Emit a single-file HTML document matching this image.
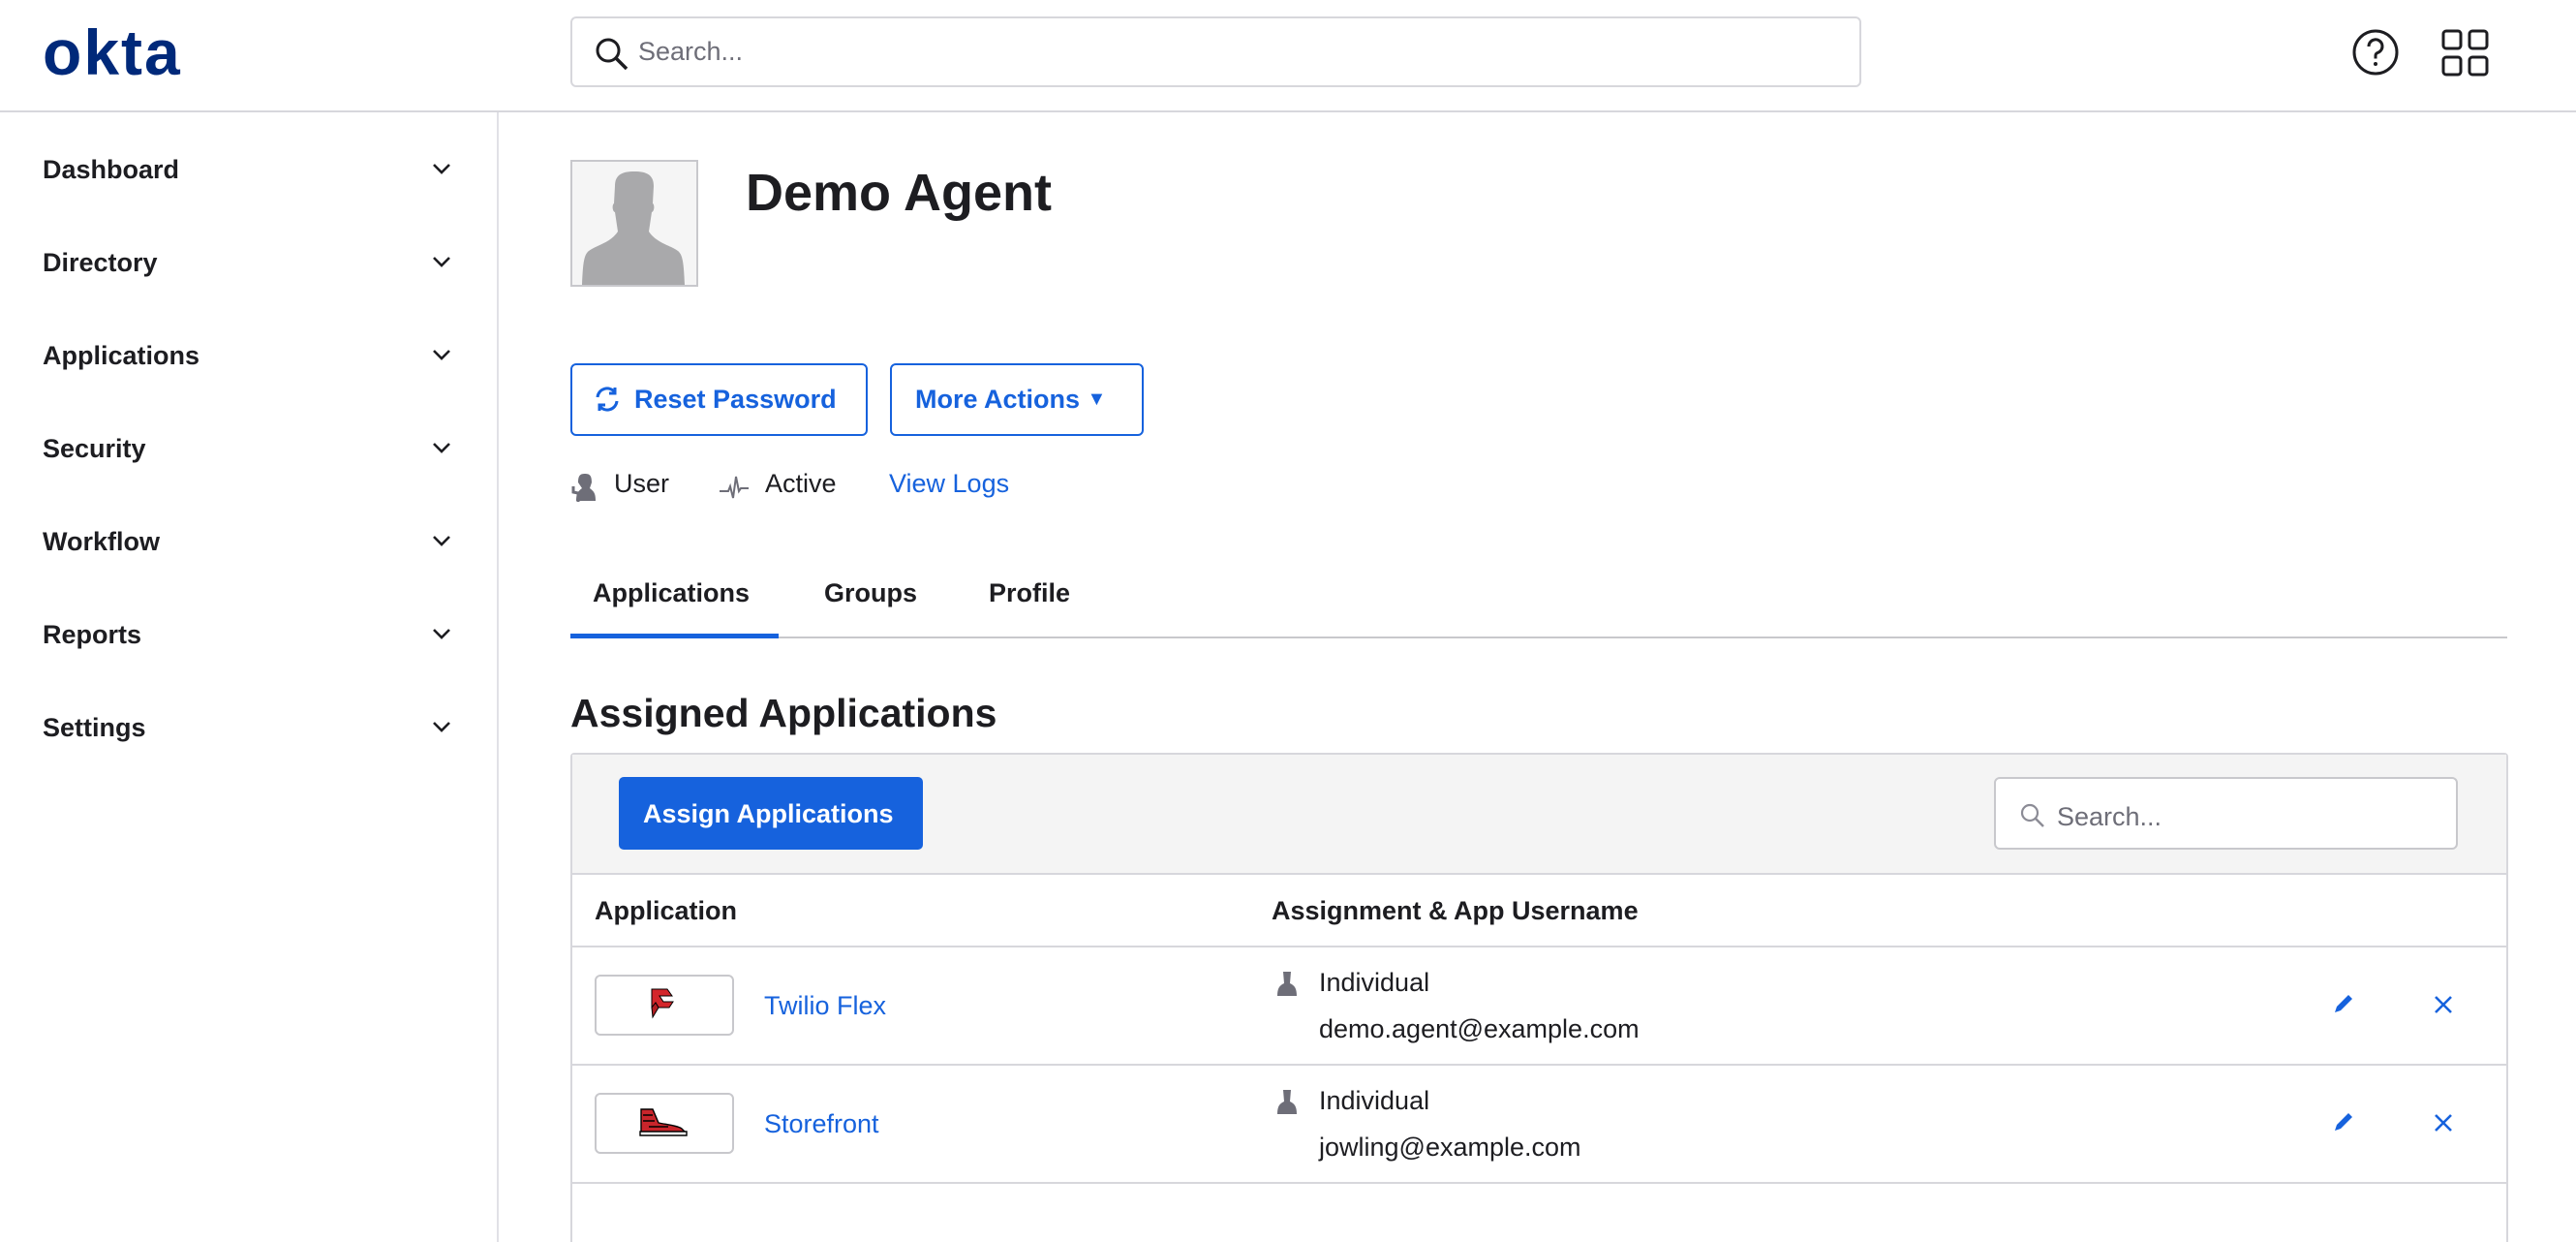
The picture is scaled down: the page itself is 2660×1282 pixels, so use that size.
<!DOCTYPE html>
<html><head><meta charset="utf-8"><style>
*{box-sizing:border-box;margin:0;padding:0}
html,body{width:2660px;height:1282px;overflow:hidden}
body{background:#fff;font-family:"Liberation Sans",sans-serif;color:#1d1d21;position:relative}
.a{position:absolute}
.blue{color:#1662dd}
.nav{position:absolute;left:44px;font-size:27px;font-weight:bold;line-height:1}
.chev{position:absolute;left:446px;width:20px;height:20px}
.t27{font-size:27px;line-height:1}
</style></head><body>
<!-- header -->
<div class="a" style="left:44px;top:21px;font-size:66px;font-weight:bold;color:#00297a;letter-spacing:2px;line-height:1">okta</div>
<div class="a" style="left:589px;top:17px;width:1333px;height:73px;border:2px solid #d7d7dc;border-radius:6px"></div>
<svg class="a" style="left:614px;top:38px" width="36" height="36" viewBox="0 0 36 36"><circle cx="14" cy="14" r="11" fill="none" stroke="#1d1d21" stroke-width="3"/><line x1="22" y1="22" x2="33" y2="33" stroke="#1d1d21" stroke-width="3.5"/></svg>
<div class="a t27" style="left:659px;top:40px;color:#6e6e78">Search...</div>
<svg class="a" style="left:2428px;top:29px" width="50" height="50" viewBox="0 0 50 50"><circle cx="25" cy="25" r="22" fill="none" stroke="#1d1d21" stroke-width="3"/><path d="M18 19a7 7 0 1 1 9 6.5c-1.5.6-2 1.5-2 3v3" fill="none" stroke="#1d1d21" stroke-width="3"/><circle cx="25" cy="37" r="2" fill="#1d1d21"/></svg>
<svg class="a" style="left:2521px;top:30px" width="50" height="50" viewBox="0 0 50 50" fill="none" stroke="#1d1d21" stroke-width="3"><rect x="2" y="2" width="18" height="18" rx="3"/><rect x="29" y="2" width="18" height="18" rx="3"/><rect x="2" y="29" width="18" height="18" rx="3"/><rect x="29" y="29" width="18" height="18" rx="3"/></svg>
<div class="a" style="left:0;top:114px;width:2660px;height:2px;background:#d7d7dc"></div>
<div class="a" style="left:513px;top:116px;width:2px;height:1166px;background:#e1e1e6"></div>
<!-- nav -->
<div class="nav" style="top:162px">Dashboard</div>
<div class="nav" style="top:258px">Directory</div>
<div class="nav" style="top:354px">Applications</div>
<div class="nav" style="top:450px">Security</div>
<div class="nav" style="top:546px">Workflow</div>
<div class="nav" style="top:642px">Reports</div>
<div class="nav" style="top:738px">Settings</div>
<svg width="0" height="0" style="position:absolute"><defs><path id="cv" d="M2 6l8 8 8-8" fill="none" stroke="#1d1d21" stroke-width="2.6"/></defs></svg>
<svg class="chev" style="top:164px"><use href="#cv"/></svg>
<svg class="chev" style="top:260px"><use href="#cv"/></svg>
<svg class="chev" style="top:356px"><use href="#cv"/></svg>
<svg class="chev" style="top:452px"><use href="#cv"/></svg>
<svg class="chev" style="top:548px"><use href="#cv"/></svg>
<svg class="chev" style="top:644px"><use href="#cv"/></svg>
<svg class="chev" style="top:740px"><use href="#cv"/></svg>
<!-- profile -->
<div class="a" style="left:589px;top:165px;width:132px;height:131px;border:2px solid #c8c8cc;background:#f5f5f5;overflow:hidden">
<svg width="128" height="127" viewBox="0 0 128 127"><path d="M44 25c0-12 8-15 20-15s20 3 20 15l-1 18c2 1 2 8-1 9l-3 20c8 12 22 14 30 20 5 4 6 12 7 35H10c1-23 2-31 7-35 8-6 22-8 30-20l-3-20c-3-1-3-8-1-9z" fill="#a9a9ab"/></svg></div>
<div class="a" style="left:770px;top:172px;font-size:54px;font-weight:bold;line-height:1">Demo Agent</div>
<div class="a" style="left:589px;top:375px;width:307px;height:75px;border:2px solid #1662dd;border-radius:6px"></div>
<svg class="a" style="left:613px;top:398px" width="28" height="28" viewBox="0 0 28 28" fill="none" stroke="#1662dd" stroke-width="3"><path d="M4 12a10 10 0 0 1 18-5"/><path d="M24 16a10 10 0 0 1-18 5"/><path d="M22 2v6h-6M6 26v-6h6"/></svg>
<div class="a t27 blue" style="left:655px;top:399px;font-weight:bold">Reset Password</div>
<div class="a" style="left:919px;top:375px;width:262px;height:75px;border:2px solid #1662dd;border-radius:6px"></div>
<div class="a t27 blue" style="left:945px;top:399px;font-weight:bold">More Actions <span style="font-size:20px;position:relative;top:-3px">▼</span></div>
<svg class="a" style="left:589px;top:488px" width="28" height="30" viewBox="0 0 28 30"><path d="M8 10c0-7 2-9 7-9s7 2 7 9l-2 6c4 3 6 5 6 13H6c0-8 2-10 6-13z" fill="#6e6e78"/><path d="M3 14v6l5 1v9" stroke="#6e6e78" stroke-width="3" fill="none"/></svg>
<div class="a t27" style="left:634px;top:486px">User</div>
<svg class="a" style="left:743px;top:490px" width="30" height="26" viewBox="0 0 30 26"><path d="M0 17h9l2-5 3 12 3-22 3 15 2-3h8" fill="none" stroke="#6e6e78" stroke-width="2"/></svg>
<div class="a t27" style="left:790px;top:486px">Active</div>
<div class="a t27 blue" style="left:918px;top:486px">View Logs</div>
<!-- tabs -->
<div class="a t27" style="left:612px;top:599px;font-weight:bold">Applications</div>
<div class="a t27" style="left:851px;top:599px;font-weight:bold">Groups</div>
<div class="a t27" style="left:1021px;top:599px;font-weight:bold">Profile</div>
<div class="a" style="left:589px;top:657px;width:2000px;height:2px;background:#c8c8cc"></div>
<div class="a" style="left:589px;top:654px;width:215px;height:5px;background:#1662dd"></div>
<div class="a" style="left:589px;top:716px;font-size:41px;font-weight:bold;line-height:1">Assigned Applications</div>
<!-- panel -->
<div class="a" style="left:589px;top:777px;width:2001px;height:505px;border:2px solid #d7d7dc;border-bottom:none;border-radius:4px 4px 0 0"></div>
<div class="a" style="left:591px;top:779px;width:1997px;height:124px;background:#f4f4f4;border-bottom:2px solid #d7d7dc"></div>
<div class="a" style="left:639px;top:802px;width:314px;height:75px;background:#1662dd;border-radius:5px"></div>
<div class="a t27" style="left:664px;top:827px;color:#fff;font-weight:bold">Assign Applications</div>
<div class="a" style="left:2059px;top:802px;width:479px;height:75px;border:2px solid #c8c8cc;border-radius:6px;background:#fff"></div>
<svg class="a" style="left:2085px;top:828px" width="28" height="28" viewBox="0 0 28 28"><circle cx="11" cy="11" r="8" fill="none" stroke="#8c8c96" stroke-width="2.2"/><line x1="17" y1="17" x2="25" y2="25" stroke="#8c8c96" stroke-width="2.5"/></svg>
<div class="a t27" style="left:2124px;top:830px;color:#6e6e78">Search...</div>
<div class="a t27" style="left:614px;top:927px;font-weight:bold">Application</div>
<div class="a t27" style="left:1313px;top:927px;font-weight:bold">Assignment &amp; App Username</div>
<div class="a" style="left:591px;top:976px;width:1997px;height:2px;background:#d7d7dc"></div>
<div class="a" style="left:591px;top:1098px;width:1997px;height:2px;background:#d7d7dc"></div>
<div class="a" style="left:591px;top:1220px;width:1997px;height:2px;background:#d7d7dc"></div>
<!-- row1 -->
<div class="a" style="left:614px;top:1006px;width:144px;height:63px;border:2px solid #c8c8cc;border-radius:6px"></div>
<svg class="a" style="left:668px;top:1019px" width="36" height="36" viewBox="0 0 36 36"><path d="M5 2h16l5 7H13l4 6h10l-4 6H12L9 16l-4 5V13z" fill="#d3262b" stroke="#000" stroke-width="1"/><path d="M5 21l4-5 3 5-6 10z" fill="#b01e22" stroke="#000" stroke-width="1"/></svg>
<div class="a t27 blue" style="left:789px;top:1025px">Twilio Flex</div>
<svg class="a" style="left:1318px;top:1001px" width="22" height="28" viewBox="0 0 22 28"><path d="M7 2h8l-1 12c4 2 7 4 7 13H1c0-9 3-11 7-13z" fill="#6e6e78"/></svg>
<div class="a t27" style="left:1362px;top:1001px">Individual</div>
<div class="a t27" style="left:1362px;top:1049px">demo.agent@example.com</div>
<svg class="a" style="left:2408px;top:1024px" width="24" height="24" viewBox="0 0 24 24"><path d="M3 21l2-6L17 3l4 4L9 19z" fill="#1662dd"/></svg>
<svg class="a" style="left:2513px;top:1027px" width="20" height="20" viewBox="0 0 20 20"><path d="M2 2l16 16M18 2L2 18" stroke="#1662dd" stroke-width="2.6"/></svg>
<!-- row2 -->
<div class="a" style="left:614px;top:1128px;width:144px;height:63px;border:2px solid #c8c8cc;border-radius:6px"></div>
<svg class="a" style="left:660px;top:1143px" width="52" height="32" viewBox="0 0 52 32"><path d="M2 2h12l6 14c10 2 20 3 24 6l4 4H2z" fill="#c8252b" stroke="#000" stroke-width="1.4"/><path d="M4 8h10M4 14h12M10 20h20" stroke="#000" stroke-width="1.4"/><path d="M1 25h48v4H1z" fill="#fff" stroke="#000" stroke-width="1.4"/></svg>
<div class="a t27 blue" style="left:789px;top:1147px">Storefront</div>
<svg class="a" style="left:1318px;top:1123px" width="22" height="28" viewBox="0 0 22 28"><path d="M7 2h8l-1 12c4 2 7 4 7 13H1c0-9 3-11 7-13z" fill="#6e6e78"/></svg>
<div class="a t27" style="left:1362px;top:1123px">Individual</div>
<div class="a t27" style="left:1362px;top:1171px">jowling@example.com</div>
<svg class="a" style="left:2408px;top:1146px" width="24" height="24" viewBox="0 0 24 24"><path d="M3 21l2-6L17 3l4 4L9 19z" fill="#1662dd"/></svg>
<svg class="a" style="left:2513px;top:1149px" width="20" height="20" viewBox="0 0 20 20"><path d="M2 2l16 16M18 2L2 18" stroke="#1662dd" stroke-width="2.6"/></svg>
</body></html>
